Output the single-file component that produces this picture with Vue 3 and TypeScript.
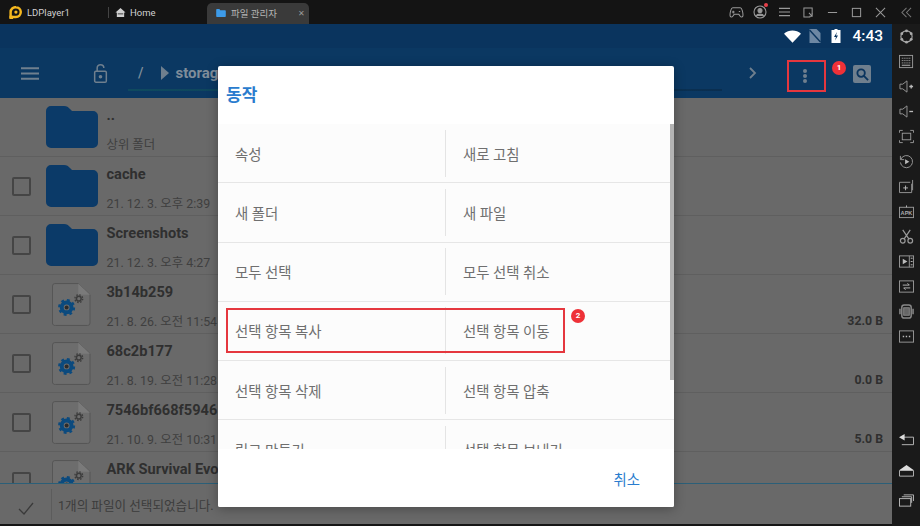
<script setup lang="ts">
interface Row { name: string; sub?: string; size?: string; kind: 'up' | 'folder' | 'file' }
const rows: Row[] = [
  { name: '..', sub: '상위 폴더', kind: 'up' },
  { name: 'cache', sub: '21. 12. 3. 오후 2:39', kind: 'folder' },
  { name: 'Screenshots', sub: '21. 12. 3. 오후 4:27', kind: 'folder' },
  { name: '3b14b259', sub: '21. 8. 26. 오전 11:54', size: '32.0 B', kind: 'file' },
  { name: '68c2b177', sub: '21. 8. 19. 오전 11:28', size: '0.0 B', kind: 'file' },
  { name: '7546bf668f5946', sub: '21. 10. 9. 오전 10:31', size: '5.0 B', kind: 'file' },
  { name: 'ARK Survival Evolved', kind: 'file' },
]
const actions: [string, string][] = [
  ['속성', '새로 고침'],
  ['새 폴더', '새 파일'],
  ['모두 선택', '모두 선택 취소'],
  ['선택 항목 복사', '선택 항목 이동'],
  ['선택 항목 삭제', '선택 항목 압축'],
  ['링크 만들기', '선택 항목 보내기'],
]
</script>

<template>
  <div class="root">
    <header class="titlebar">
      <div class="brand">
        <svg class="logo" viewBox="0 0 16 16"><path d="M8.500 1.500a6 6 0 0 1 0 12H2V7.500a6 6 0 0 1 6.500-6z" fill="none" stroke="#f5b81f" stroke-width="3"/><circle cx="8.500" cy="7.500" r="2" fill="#f5b81f"/><rect x="0.500" y="12" width="4.500" height="4" fill="#f5b81f"/></svg>
        <span>LDPlayer1</span>
      </div>
      <i class="tab-sep"></i>
      <div class="home">
        <svg viewBox="0 0 12 12" width="11" height="11"><path d="M6 1 .5 6H2v5h8V6h1.500z" fill="#cfcfcf"/><rect x="3" y="7" width="6" height="1" fill="#333"/></svg>
        <span>Home</span>
      </div>
      <div class="tab">
        <svg viewBox="0 0 12 10" width="10" height="8"><path d="M0 1a1 1 0 0 1 1-1h3l1 1.500h6a1 1 0 0 1 1 1V9a1 1 0 0 1-1 1H1a1 1 0 0 1-1-1z" fill="#3d9be9"/></svg>
        <span class="tab-label">파일 관리자</span>
        <span class="tab-x">✕</span>
      </div>
      <div class="win">
        <span class="wi"><svg viewBox="0 0 16 14" width="15" height="13" fill="none" stroke="#999" stroke-width="1.100"><path d="M4 2h8c2 0 3 5 3 8 0 2-2 2.500-3 1l-1.500-2h-5L4 11c-1 1.500-3 1-3-1 0-3 1-8 3-8z"/><path d="M4.500 5v3M3 6.500h3M10.500 6h1.500"/></svg></span>
        <span class="wi avatar">
          <svg viewBox="0 0 14 14" width="14" height="14" fill="none" stroke="#999" stroke-width="1.100"><circle cx="7" cy="7" r="6"/><circle cx="7" cy="5.500" r="2" fill="#999"/><path d="M3.500 11c.5-2.500 6.500-2.500 7 0" fill="#999"/></svg>
          <i class="red-dot"></i>
        </span>
        <span class="wi"><svg viewBox="0 0 12 10" width="11" height="10" stroke="#999" stroke-width="1.200"><path d="M0 1h12M0 5h12M0 9h12"/></svg></span>
        <span class="wi"><svg viewBox="0 0 12 12" width="11" height="11" fill="none" stroke="#999" stroke-width="1.100"><path d="M8 11H1V1h9v7"/><path d="M6.500 6.500 10 10M10 7v3H7"/></svg></span>
        <span class="wi"><svg viewBox="0 0 12 12" width="11" height="11" stroke="#999" stroke-width="1.100"><path d="M1 6h10"/></svg></span>
        <span class="wi"><svg viewBox="0 0 12 12" width="11" height="11" fill="none" stroke="#999" stroke-width="1.100"><rect x="1.500" y="1.500" width="9" height="9"/></svg></span>
        <span class="wi"><svg viewBox="0 0 12 12" width="11" height="11" stroke="#999" stroke-width="1.100"><path d="m1 1 10 10M11 1 1 11"/></svg></span>
        <span class="wi last"><svg viewBox="0 0 12 12" width="11" height="11" fill="none" stroke="#777" stroke-width="1.100"><path d="M6 1 1 6l5 5M11 1 6 6l5 5"/></svg></span>
      </div>
    </header>

    <div class="body">
      <main class="android">
        <div class="status">
          <svg class="wifi" viewBox="0 0 18 13" width="17" height="13"><path d="M0 3.500C5-1 13-1 18 3.500L9 13z" fill="#fff"/></svg>
          <svg class="sim" viewBox="0 0 11 14" width="12" height="14"><path d="M0 0h7l4 4v10H0z" fill="#6d87a3"/><path d="m0 1 11 12" stroke="#0a345e" stroke-width="1.500"/></svg>
          <svg class="batt" viewBox="0 0 9 14" width="10" height="14"><path d="M3 0h3v1h3v13H0V1h3z" fill="#fff"/><path d="M5.500 3 2.500 8h2l-1 3.500 3-5h-2z" fill="#0a345e"/></svg>
          <span class="clock">4:43</span>
        </div>
        <div class="appbar">
          <svg class="menu" viewBox="0 0 18 13" width="18" height="13"><path d="M0 1.200h18M0 6.500h18M0 11.800h18" stroke="#6f7f8e" stroke-width="2"/></svg>
          <svg class="lock" viewBox="0 0 16 24" width="15" height="20" fill="none" stroke="#6f7f8e" stroke-width="1.800"><path d="M4 10V6a4 4 0 0 1 8 0"/><rect x="1" y="10" width="14" height="13" rx="1.500"/><circle cx="8" cy="16.500" r="1.300" fill="#6f7f8e"/></svg>
          <span class="slash">/</span>
          <i class="tri"></i>
          <span class="crumb">storage</span>
          <i class="crumb-line"></i>
          <svg class="chev" viewBox="0 0 8 12" width="8" height="12" fill="none" stroke="#6f7f8e" stroke-width="1.800"><path d="m1 1 5 5-5 5"/></svg>
          <div class="more"><i></i><i></i><i></i></div>
          <span class="badge one">1</span>
          <span class="search">
            <svg viewBox="0 0 14 14" width="13" height="13" fill="none" stroke="#0a345e" stroke-width="2"><circle cx="5.500" cy="5.500" r="4"/><path d="m8.500 8.500 4.500 4.500"/></svg>
          </span>
        </div>

        <ul class="list">
          <li v-for="r in rows" :key="r.name" class="row">
            <span class="check-slot"><i v-if="r.kind !== 'up'" class="check"></i></span>
            <svg v-if="r.kind !== 'file'" class="folder" viewBox="0 0 52 42"><path d="M0 5a5 5 0 0 1 5-5h13c3 0 4 1 6 3l2 2h21a5 5 0 0 1 5 5v27a5 5 0 0 1-5 5H5a5 5 0 0 1-5-5z" fill="#0b3a68"/></svg>
            <svg v-else class="file" viewBox="0 0 40 44">
              <path d="M3 .5h24L39 12v29a2.500 2.500 0 0 1-2.500 2.500h-33A2.500 2.500 0 0 1 .5 41V3A2.500 2.500 0 0 1 3 .5z" fill="#6d6d6d" stroke="#555"/>
              <path d="M27 .5V12h12z" fill="#7a7a7a"/>
              <circle cx="15" cy="25" r="5" fill="none" stroke="#0b4a7e" stroke-width="4"/>
              <circle cx="15" cy="25" r="7.500" fill="none" stroke="#0b4a7e" stroke-width="2.500" stroke-dasharray="2.900 3"/>
              <circle cx="15" cy="25" r="2" fill="#2b2b2b"/>
              <circle cx="27.500" cy="16" r="2.400" fill="none" stroke="#3c3c3c" stroke-width="1.500"/>
              <circle cx="27.500" cy="16" r="4" fill="none" stroke="#3c3c3c" stroke-width="1.300" stroke-dasharray="1.600 1.540"/>
            </svg>
            <div class="meta">
              <div class="name">{{ r.name }}</div>
              <div v-if="r.sub" class="sub">{{ r.sub }}</div>
            </div>
            <span v-if="r.size" class="size">{{ r.size }}</span>
          </li>
        </ul>

        <footer class="bottom">
          <svg class="tick" viewBox="0 0 16 13" width="16" height="13" fill="none" stroke="#3a3a3a" stroke-width="1.300"><path d="m1 7 5 5L15 1"/></svg>
          <i class="bottom-sep"></i>
          <span class="bottom-text">1개의 파일이 선택되었습니다.</span>
        </footer>

        <section class="dialog">
          <h2>동작</h2>
          <div class="actions">
            <div v-for="(a, i) in actions" :key="i" class="act-row">
              <div class="act">{{ a[0] }}</div>
              <div class="act second">{{ a[1] }}</div>
            </div>
            <i class="scroll"></i>
          </div>
          <div class="cancel-bar"><span class="cancel">취소</span></div>
          <div class="hl"></div>
          <span class="badge two">2</span>
        </section>
      </main>

      <aside class="side">
        <div class="side-top">
          <svg viewBox="0 0 16 16"><circle cx="8" cy="8" r="6" fill="none" stroke="#aaa" stroke-width="1.200"/><g fill="#aaa"><circle cx="8" cy="2" r="1.500"/><circle cx="13" cy="5" r="1.500"/><circle cx="13" cy="11" r="1.500"/><circle cx="8" cy="14" r="1.500"/><circle cx="3" cy="11" r="1.500"/><circle cx="3" cy="5" r="1.500"/></g></svg>
          <svg viewBox="0 0 16 14"><rect x=".5" y=".5" width="14" height="13" fill="none" stroke="#999"/><path d="M3 3.500h9M3 6h9M3 8.500h9" stroke="#bbb" stroke-dasharray="1 1"/><path d="M3 11h9" stroke="#bbb"/></svg>
          <svg viewBox="0 0 16 14" fill="none" stroke="#999"><path d="M1 4.500h3L8.500 1v12L4 9.500H1z"/><path d="M11 7h4M13 5v4" stroke="#bbb" stroke-width="1.400"/></svg>
          <svg viewBox="0 0 16 14" fill="none" stroke="#999"><path d="M1 4.500h3L8.500 1v12L4 9.500H1z"/><path d="M11 7h4" stroke="#bbb" stroke-width="1.400"/></svg>
          <svg viewBox="0 0 16 14" fill="none" stroke="#999"><rect x="3.500" y="3.500" width="9" height="7"/><path d="M.5 3V.5H4M12 .5h3.500V3M15.500 11v2.500H12M4 13.500H.5V11"/></svg>
          <svg viewBox="0 0 16 16" fill="none" stroke="#999"><path d="M2 5.500A6.500 6.500 0 1 1 1.500 9"/><path d="M1.500 2v4h4"/><path d="m6.500 5.500 4.500 2.700-4.500 2.600z" fill="#bbb" stroke="none"/></svg>
          <svg viewBox="0 0 16 14" fill="none" stroke="#999"><path d="M12 2.500H.5v11h13V4"/><path d="M14.500 0v11"/><path d="M7 6v5M4.500 8.500h5" stroke="#bbb"/></svg>
          <svg viewBox="0 0 16 14" fill="none" stroke="#999"><rect x=".5" y="2.500" width="15" height="11"/><path d="M8 .5v2" stroke="#bbb"/><text x="8" y="10.500" text-anchor="middle" font-size="6" font-family="Liberation Sans" font-weight="700" fill="#aaa" stroke="none">APK</text></svg>
          <svg viewBox="0 0 16 16" fill="none" stroke="#999" stroke-width="1.300"><circle cx="4" cy="12.500" r="2.500"/><circle cx="12" cy="12.500" r="2.500"/><path d="M5.500 10.500 12 1M10.500 10.500 4 1"/></svg>
          <svg viewBox="0 0 16 13" fill="none" stroke="#999"><rect x=".5" y=".5" width="15" height="12"/><path d="M11 .5v12"/><path d="m4 3.500 5 3-5 3z" fill="#bbb" stroke="none"/><path d="M12.500 3h2M12.500 6.500h2M12.500 10h2" stroke="#bbb"/></svg>
          <svg viewBox="0 0 16 13" fill="none" stroke="#999"><rect x=".5" y=".5" width="15" height="12"/><path d="M4 5h7l-2-2M12 8H5l2 2" stroke="#bbb"/></svg>
          <svg viewBox="0 0 16 16" fill="none" stroke="#888" stroke-width="1.600"><rect x="3" y="1" width="10" height="14" rx="2.500"/><path d="M1 5v6M15 5v6"/><rect x="5" y="4" width="6" height="8" stroke-width="1" fill="#666"/></svg>
          <svg viewBox="0 0 16 13" fill="none" stroke="#999"><rect x=".5" y=".5" width="15" height="12"/><path d="M4 6.500h1.500M7.200 6.500h1.500M10.500 6.500H12" stroke="#bbb" stroke-width="1.400"/></svg>
        </div>
        <div class="side-bottom">
          <svg viewBox="0 0 16 13" fill="none" stroke="#bbb"><path d="M5 4h10.500v8H3" /><path d="M0 4 6 .5v7z" fill="#ddd" stroke="none"/></svg>
          <svg viewBox="0 0 16 13" fill="none" stroke="#bbb"><path d="M.5 6.500h15v6H.5z"/><path d="M.5 6 8 .5 15.500 6z" fill="#ddd" stroke="none"/></svg>
          <svg viewBox="0 0 16 13" fill="none" stroke="#bbb"><rect x=".5" y="4.500" width="12" height="8"/><path d="M3 2.500h10.500V9M5 .5h10.500V7"/></svg>
        </div>
      </aside>
    </div>
  </div>
</template>

<style>
html, body { margin: 0; background: #111; overflow: hidden; }
</style>

<style scoped>
.root { width: 920px; height: 526px; display: flex; flex-direction: column; font-family: Roboto, "Noto Sans CJK KR", sans-serif; overflow: hidden; background: #151515; }
.titlebar { height: 24px; flex: none; display: flex; align-items: center; background: #141414; color: #d0d0d0; font-size: 9.500px; position: relative; }
.brand { display: flex; align-items: center; gap: 5px; width: 108px; padding-left: 9px; box-sizing: border-box; }
.logo { width: 13px; height: 13px; flex: none; }
.tab-sep { width: 1px; height: 11px; background: #444; }
.home { display: flex; align-items: center; gap: 4px; margin-left: 6px; width: 92px; }
.tab { width: 102px; height: 21px; align-self: flex-end; background: #3a3a3a; border-radius: 5px 5px 0 0; display: flex; align-items: center; box-sizing: border-box; padding: 0 4px 1px 9px; gap: 5px; color: #b5b5b5; }
.tab-label { flex: 1; }
.tab-x { font-size: 8px; color: #999; }
.win { margin-left: auto; display: flex; align-items: center; }
.wi { width: 24px; height: 24px; display: flex; align-items: center; justify-content: center; }
.wi.last { width: 28px; }
.avatar { position: relative; }
.red-dot { position: absolute; right: 4px; top: 3px; width: 4px; height: 4px; border-radius: 50%; background: #e8404a; }

.body { flex: 1; display: flex; min-height: 0; }
.android { position: relative; width: 892px; height: 500px; flex: none; background: #696969; display: flex; flex-direction: column; overflow: hidden; }
.status { height: 24px; flex: none; background: #0a345e; display: flex; align-items: center; justify-content: flex-end; padding-right: 9px; color: #fff; }
.sim { margin-left: 8px; }
.batt { margin-left: 10px; }
.clock { font-size: 15.500px; font-weight: 500; margin-left: 11px; }
.appbar { height: 50px; flex: none; background: #0b3862; display: flex; align-items: center; position: relative; }
.menu { margin-left: 21px; }
.lock { margin-left: 54px; }
.slash { margin-left: 30px; color: #7f8d9a; font-size: 14px; font-weight: 500; }
.tri { margin-left: 18px; width: 0; height: 0; border-left: 8px solid #6f7f8e; border-top: 7px solid transparent; border-bottom: 7px solid transparent; }
.crumb { margin-left: 6px; color: #7f8d9a; font-size: 15px; font-weight: 700; }
.crumb-line { position: absolute; left: 128px; width: 594px; bottom: 7px; height: 2px; background: linear-gradient(90deg, #0f4a5f, #0a2e50); }
.chev { position: absolute; left: 749px; top: 19px; }
.more { position: absolute; left: 787px; top: 12px; width: 31px; height: 28px; padding-right: 4px; box-sizing: content-box; border: 2px solid #e5373e; display: flex; flex-direction: column; align-items: center; justify-content: center; gap: 1px; }
.more i { width: 4px; height: 4px; border-radius: 50%; background: #6f7f8e; }
.badge { position: absolute; width: 14px; height: 14px; border-radius: 50%; background: #ee3138; color: #fff; font: 700 8px/14px Roboto, sans-serif; text-align: center; }
.one { left: 832px; top: 13px; }
.search { position: absolute; left: 853px; top: 17px; width: 18px; height: 18px; border-radius: 2px; background: #6f7f8e; display: flex; align-items: center; justify-content: center; }

.list { list-style: none; margin: 0; padding: 0; flex: 1; overflow: hidden; min-height: 0; }
.row { height: 59px; box-sizing: border-box; border-bottom: 1px solid #5f5f5f; display: flex; align-items: center; position: relative; }
.check-slot { width: 45px; flex: none; display: flex; justify-content: center; box-sizing: border-box; }
.check { width: 19px; height: 19px; box-sizing: border-box; margin-right: 3px; border: 2px solid #454545; border-radius: 2px; }
.folder { width: 52px; height: 42px; flex: none; margin-left: 1px; }
.file { width: 39px; height: 43px; flex: none; margin-left: 7px; margin-right: 7px; }
.meta { margin-left: 8.500px; margin-top: 5px; display: flex; flex-direction: column; justify-content: space-between; height: 46px; white-space: nowrap; }
.name { font-size: 14.600px; font-weight: 700; color: #2f2f2f; line-height: 17px; }
.sub { font-size: 12.400px; color: #3f3f3f; line-height: 16px; }
.size { position: absolute; right: 9px; top: 39px; font-size: 12.300px; font-weight: 700; color: #2f2f2f; }
.bottom { height: 41px; flex: none; background: #696969; border-top: 1px solid #2b5f78; display: flex; align-items: center; box-sizing: border-box; }
.tick { margin-left: 18px; margin-top: 8px; }
.bottom-sep { width: 1px; height: 31px; background: #5c5c5c; margin-left: 17px; }
.bottom-text { margin-left: 6px; font-size: 12.600px; color: #3c3c3c; white-space: nowrap; }

.dialog { position: absolute; left: 218px; top: 42px; width: 456px; height: 441px; background: #fff; border-radius: 2px; box-shadow: 0 2px 12px rgba(0, 0, 0, .3); display: flex; flex-direction: column; overflow: hidden; }
.dialog h2 { margin: 0; height: 58px; flex: none; box-sizing: border-box; padding: 19px 0 0 8px; font-size: 17px; font-weight: 700; line-height: 20px; color: #2a7cce; }
.actions { position: relative; flex: 1; min-height: 0; overflow: hidden; background: #fcfcfc; }
.act-row { height: 59.250px; box-sizing: border-box; border-bottom: 1px solid #e6e6e6; display: flex; align-items: center; }
.act { width: 227px; height: 47px; flex: none; box-sizing: border-box; padding-left: 17px; display: flex; align-items: center; font-size: 14.400px; color: #6f6f6f; }
.act.second { border-left: 1px solid #e4e4e4; width: 228px; }
.scroll { position: absolute; right: 0; top: -1px; width: 4px; height: 257px; background: #b4b4b4; }
.cancel-bar { height: 58px; flex: none; background: #fff; display: flex; align-items: center; justify-content: flex-end; padding-right: 34px; }
.cancel { font-size: 14.400px; color: #2a7cce; }
.hl { position: absolute; left: 8px; top: 242px; width: 339px; height: 45px; box-sizing: border-box; border: 2px solid #e5373e; }
.two { left: 353px; top: 243px; }

.side { width: 28px; flex: none; background: #1a1a1a; display: flex; flex-direction: column; justify-content: space-between; align-items: center; box-sizing: border-box; }
.side svg { width: 15px; height: 15px; display: block; }
.side-top { display: flex; flex-direction: column; gap: 10px; padding-top: 5px; }
.side-bottom { display: flex; flex-direction: column; gap: 15.500px; padding-bottom: 18px; }
</style>
